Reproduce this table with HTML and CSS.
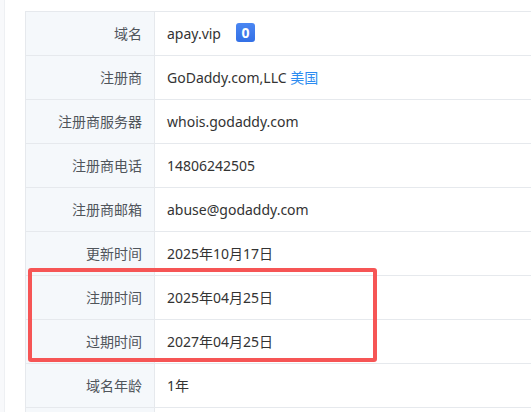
FILE: index.html
```html
<!DOCTYPE html>
<html lang="zh-CN">
<head>
<meta charset="utf-8">
<link rel="stylesheet" href="styles.css">
</head>
<body>
<div class="page">
  <div class="side"></div>
  <div class="main">
    <div class="wrap">
      <table class="info">
        <tr><td class="k">域名</td><td class="v">apay.vip<span class="badge">0</span></td></tr>
        <tr><td class="k">注册商</td><td class="v">GoDaddy.com,LLC <span class="link">美国</span></td></tr>
        <tr><td class="k">注册商服务器</td><td class="v">whois.godaddy.com</td></tr>
        <tr><td class="k">注册商电话</td><td class="v">14806242505</td></tr>
        <tr><td class="k">注册商邮箱</td><td class="v">abuse@godaddy.com</td></tr>
        <tr><td class="k">更新时间</td><td class="v">2025年10月17日</td></tr>
        <tr><td class="k">注册时间</td><td class="v">2025年04月25日</td></tr>
        <tr><td class="k">过期时间</td><td class="v">2027年04月25日</td></tr>
        <tr><td class="k">域名年龄</td><td class="v">1年</td></tr>
        <tr><td class="k">&nbsp;</td><td class="v">&nbsp;</td></tr>
      </table>
      <div class="mark"></div>
    </div>
  </div>
</div>
</body>
</html>
```
FILE: styles.css
```css
html, body {
  margin: 0;
  padding: 0;
  background: #fff;
  overflow: hidden;
}
body {
  font-family: "Noto Sans", "Noto Sans CJK SC", sans-serif;
  font-size: 14px;
}
.page {
  display: flex;
  height: 412px;
  overflow: hidden;
}
.side {
  width: 4px;
  background: #f8f9fb;
  border-right: 1px solid #eef0f3;
  flex: none;
}
.main {
  flex: 1;
  padding: 11px 0 0 20px;
  min-width: 0;
  overflow: hidden;
}
.wrap {
  position: relative;
  width: 540px;
}
.info {
  border-collapse: collapse;
  width: 100%;
}
.info td {
  border: 1px solid #e6e9ed;
  height: 44px;
  padding: 0;
  box-sizing: border-box;
  line-height: 20px;
}
.info .k {
  width: 129px;
  background: #f5f8fb;
  color: #50555b;
  text-align: right;
  padding-right: 12px;
  box-sizing: border-box;
}
.info .v {
  color: #333;
  padding-left: 12px;
}
.badge {
  display: inline-block;
  margin-left: 15px;
  width: 19px;
  height: 19px;
  line-height: 19px;
  border-radius: 3px;
  background: linear-gradient(#4a86f2, #3370e6);
  color: #fff;
  font-weight: bold;
  text-align: center;
  font-size: 14px;
  vertical-align: 1px;
}
.link {
  color: #2d8cf0;
}
.mark {
  position: absolute;
  left: 3px;
  top: 257px;
  width: 349px;
  height: 94px;
  border: 4px solid #f65555;
  border-radius: 3px;
  box-sizing: border-box;
}
```
